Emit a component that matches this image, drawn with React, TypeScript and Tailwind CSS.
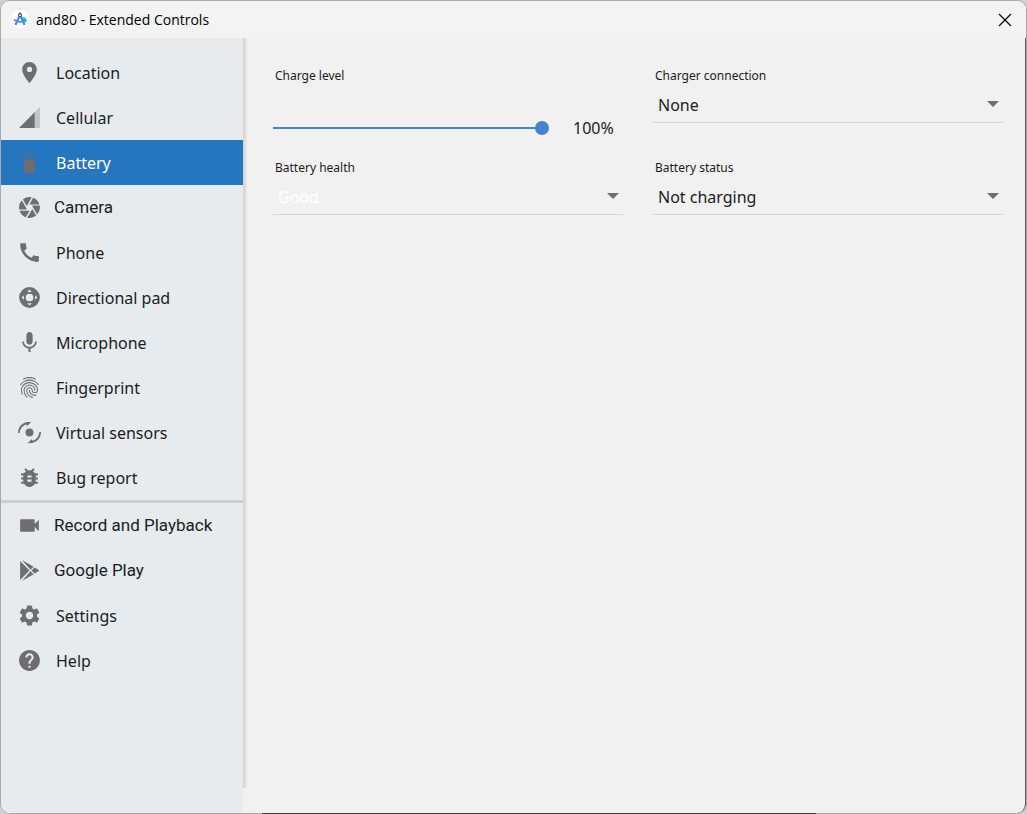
import { useState, type ReactNode } from "react";
import {
  MdBugReport,
  MdCall,
  MdCamera,
  MdFingerprint,
  MdHelp,
  MdLocationOn,
  MdMic,
  MdSettings,
  MdVideocam,
} from "react-icons/md";

const icon = "size-[25px] shrink-0";

function CellularIcon() {
  return (
    <svg viewBox="0 0 24 24" className={icon} fill="currentColor">
      <path fillOpacity=".3" d="M2 22h20V2z" />
      <path d="M17 7L2 22h15z" />
    </svg>
  );
}

function BatteryIcon() {
  return (
    <svg viewBox="0 0 24 24" className={icon} fill="currentColor">
      <path
        fillOpacity=".3"
        d="M17 5.33C17 4.6 16.4 4 15.67 4H14V2h-4v2H8.33C7.6 4 7 4.6 7 5.33V9h10V5.33z"
      />
      <path d="M7 9v11.67C7 21.4 7.6 22 8.33 22h7.33c.74 0 1.34-.6 1.34-1.33V9H7z" />
    </svg>
  );
}

function DpadIcon() {
  return (
    <svg viewBox="0 0 24 24" className={icon} fill="currentColor">
      <path
        fillRule="evenodd"
        d="M12 2a10 10 0 1 0 0 20 10 10 0 0 0 0-20zM12 8.300a3.700 3.700 0 1 1 0 7.400 3.700 3.700 0 0 1 0-7.400zM12 4.400l2.200 2.200H9.800zM12 19.600l-2.200-2.200h4.400zM4.400 12l2.200-2.200v4.400zM19.600 12l-2.200 2.200V9.800z"
      />
    </svg>
  );
}

function SensorsIcon() {
  return (
    <svg viewBox="0 0 24 24" className={icon} fill="currentColor">
      <circle cx="12" cy="12" r="3.800" />
      <path d="M1 12.500C.9 7 5 2.600 9.800 2L13.700 1.800 10 5.600 8.700 4.200C5.600 5.200 2.700 8.300 2.600 12.500z" />
      <path d="M23 11.500C23.100 17 19 21.400 14.200 22L10.300 22.200 14 18.400 15.300 19.800C18.400 18.800 21.300 15.700 21.400 11.500z" />
    </svg>
  );
}

function PlayIcon() {
  return (
    <svg viewBox="0 0 24 24" className={icon} fill="currentColor">
      <path d="M3 2.800v18.400L12 12z" />
      <path d="M4.700 2L16 8.300 13 11.200z" />
      <path d="M4.700 22L16 15.700 13 12.800z" />
      <path d="M16.900 9.100l3.900 2.300q.7.600 0 1.200l-3.900 2.300-3.100-2.900z" />
    </svg>
  );
}

function StudioLogo() {
  return (
    <svg viewBox="0 0 20 20" className="size-5 shrink-0" fill="none" aria-hidden="true">
      <circle cx="10" cy="9.500" r="9.300" fill="#fff" />
      <path d="M11 7c3-1 5.500.500 5.900 4l-.8 1.500h-3z" fill="#3ddc84" />
      <path d="M10 5L5.400 15M10 5l4.600 10" stroke="#4285f4" strokeWidth="2" />
      <path d="M4 9.500c2.800 3.200 9.200 3.200 12 0" stroke="#4285f4" strokeWidth="1.600" />
      <circle cx="10" cy="5.200" r="1.500" fill="#fff" stroke="#3b5573" strokeWidth="1.200" />
      <path d="M10 2.500v1.500" stroke="#3b5573" strokeWidth="1.500" />
    </svg>
  );
}

type Item = { name: string; icon: ReactNode; alt?: boolean };

const deviceItems: Item[] = [
  { name: "Location", icon: <MdLocationOn className={icon} /> },
  { name: "Cellular", icon: <CellularIcon /> },
  { name: "Battery", icon: <BatteryIcon /> },
  { name: "Camera", icon: <MdCamera className={icon} />, alt: true },
  { name: "Phone", icon: <MdCall className={icon} /> },
  { name: "Directional pad", icon: <DpadIcon /> },
  { name: "Microphone", icon: <MdMic className={icon} /> },
  { name: "Fingerprint", icon: <MdFingerprint className={icon} /> },
  { name: "Virtual sensors", icon: <SensorsIcon /> },
  { name: "Bug report", icon: <MdBugReport className={icon} /> },
];

const appItems: Item[] = [
  { name: "Record and Playback", icon: <MdVideocam className={icon} />, alt: true },
  { name: "Google Play", icon: <PlayIcon />, alt: true },
  { name: "Settings", icon: <MdSettings className={icon} /> },
  { name: "Help", icon: <MdHelp className={icon} /> },
];

function NavList(props: { items: Item[]; current: string; onPick: (name: string) => void }) {
  return (
    <ul>
      {props.items.map((item) => (
        <li key={item.name}>
          <button
            type="button"
            aria-current={item.name === props.current ? "page" : undefined}
            onClick={() => props.onPick(item.name)}
            className={
              "flex h-[45px] w-full items-center pl-4 text-left " +
              (item.alt ? "gap-3 font-[Roboto,sans-serif] text-[17px] " : "gap-[14px] text-base ") +
              (item.name === props.current ? "bg-[#2675bf] text-white" : "text-[#1c1c1c]")
            }
          >
            <span className="text-[#6e6e6e]">{item.icon}</span>
            <span>{item.name}</span>
          </button>
        </li>
      ))}
    </ul>
  );
}

function SelectField(props: { id: string; label: string; options: string[]; pale?: boolean }) {
  return (
    <div>
      <label htmlFor={props.id} className="block pl-0.5 text-xs leading-4">
        {props.label}
      </label>
      <div className="relative mt-1 border-b border-[#d6d6d6]">
        <select
          id={props.id}
          className={
            "block h-[34px] w-full appearance-none bg-transparent pr-8 pl-[5px] text-base outline-none " +
            (props.pale ? "text-white" : "text-[#1c1c1c]")
          }
        >
          {props.options.map((option) => (
            <option key={option} className="text-[#1c1c1c]">
              {option}
            </option>
          ))}
        </select>
        <svg
          viewBox="0 0 12 6"
          className="pointer-events-none absolute top-[13px] right-1 h-[6px] w-3"
          aria-hidden="true"
        >
          <path d="M0 0h12L6 6z" fill="#6e6e6e" />
        </svg>
      </div>
    </div>
  );
}

export default function App() {
  const [page, setPage] = useState("Battery");
  const [charge, setCharge] = useState(100);

  return (
    <div className="min-h-screen bg-[#d0d0d0] font-['Noto_Sans',sans-serif] text-[#1c1c1c]">
      <div className="relative flex min-h-screen flex-col rounded-[10px] border border-[#ababab] bg-[#f1f1f1]">
        <header className="flex h-[37px] items-center gap-1.5 rounded-t-[9px] bg-[#f3f3f3] pr-3.5 pl-[9px]">
          <StudioLogo />
          <h1 className="flex-1 font-['Open_Sans',sans-serif] text-sm text-black">
            and80 - Extended Controls
          </h1>
          <button type="button" aria-label="Close" className="flex size-[14px] items-center justify-center">
            <svg viewBox="0 0 14 14" className="size-[14px]" stroke="#111" strokeWidth="1.400">
              <path d="M1 1l12 12M13 1L1 13" />
            </svg>
          </button>
        </header>

        <div className="flex flex-1">
          <nav className="w-[242px] shrink-0 rounded-bl-[9px] bg-[#e5ebef] pt-3" aria-label="Controls">
            <NavList items={deviceItems} current={page} onPick={setPage} />
            <hr className="border-t-[3px] border-[#cccfd1]" />
            <NavList items={appItems} current={page} onPick={setPage} />
          </nav>
          <div className="mb-[25px] w-1 shrink-0 bg-linear-to-r from-[#cfd2d3] to-[#eaeaea]" />

          <main className="flex-1 rounded-br-[9px] border-r border-[#555] pt-[30px] pr-[22px] pl-[26px]">
            <div className="grid grid-cols-2 gap-x-[30px]">
              <div>
                <label htmlFor="charge" className="block pl-0.5 text-xs leading-4">
                  Charge level
                </label>
                <div className="mt-8 flex h-6 items-center">
                  <input
                    id="charge"
                    type="range"
                    min={0}
                    max={100}
                    value={charge}
                    onChange={(e) => setCharge(Number(e.target.value))}
                    className="h-[14px] min-w-0 flex-1 appearance-none bg-transparent [&::-webkit-slider-runnable-track]:h-0.5 [&::-webkit-slider-runnable-track]:bg-[#4285cc] [&::-webkit-slider-thumb]:-mt-1.5 [&::-webkit-slider-thumb]:size-[14px] [&::-webkit-slider-thumb]:appearance-none [&::-webkit-slider-thumb]:rounded-full [&::-webkit-slider-thumb]:bg-[#4285cc]"
                  />
                  <output htmlFor="charge" className="w-[74px] pl-6 text-base">
                    {charge}%
                  </output>
                </div>
              </div>
              <SelectField id="charger" label="Charger connection" options={["None", "AC charger"]} />
            </div>
            <div className="mt-5 grid grid-cols-2 gap-x-[30px]">
              <SelectField
                id="health"
                label="Battery health"
                options={["Good", "Failed", "Dead", "Overvoltage", "Overheated", "Unknown"]}
                pale
              />
              <SelectField
                id="status"
                label="Battery status"
                options={["Not charging", "Charging", "Discharging", "Full", "Unknown"]}
              />
            </div>
          </main>
        </div>
        <div
          className="pointer-events-none absolute right-[210px] -bottom-px left-[261px] h-px bg-[#444]"
          aria-hidden="true"
        />
      </div>
    </div>
  );
}
